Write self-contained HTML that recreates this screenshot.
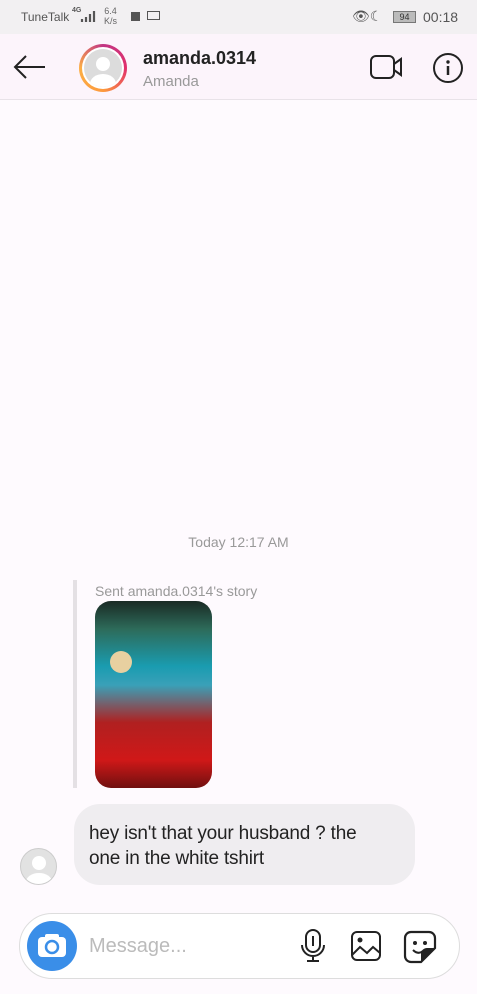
<!DOCTYPE html>
<html><head><style>
*{margin:0;padding:0;box-sizing:border-box}
body{width:477px;height:994px;background:#fefafe;font-family:"Liberation Sans",sans-serif;position:relative;overflow:hidden}
.a{position:absolute}
</style></head><body>
<div class="a" style="left:0;top:0;width:477px;height:34px;background:#f2f0f2"></div>
<div class="a" style="left:21px;top:10px;font-size:12px;color:#555">TuneTalk</div>
<div class="a" style="left:72px;top:7px;font-size:7px;color:#555;font-weight:bold">4G</div>
<svg class="a" style="left:80px;top:9px" width="18" height="14"><path d="M2 13v-3M6 13v-5M10 13v-8M14 13V2" stroke="#555" stroke-width="2.2"/></svg>
<div class="a" style="left:104px;top:6px;font-size:9px;color:#666;line-height:10px;text-align:center">6.4<br>K/s</div>
<div class="a" style="left:131px;top:12px;width:9px;height:9px;background:#555"></div>
<div class="a" style="left:147px;top:11px;width:13px;height:9px;border:1.5px solid #555"></div>
<div class="a" style="left:352px;top:8px;font-size:14px;color:#555">👁☾</div>
<div class="a" style="left:393px;top:11px;width:23px;height:12px;background:#bbb;border:1px solid #777;font-size:9px;text-align:center;line-height:10px;color:#333">94</div>
<div class="a" style="left:423px;top:9px;font-size:14px;color:#555">00:18</div>
<div class="a" style="left:0;top:34px;width:477px;height:66px;background:#fcf4fb;border-bottom:1px solid #e8e2e8"></div>
<svg class="a" style="left:12px;top:53px" width="36" height="28"><path d="M33 14H3M14 3L3 14L14 25" stroke="#222" stroke-width="2" fill="none"/></svg>
<div class="a" style="left:79px;top:44px;width:48px;height:48px;border-radius:50%;background:conic-gradient(#c13584,#e1306c,#fd9a3c,#fcaf45,#c13584)"></div>
<div class="a" style="left:82px;top:47px;width:42px;height:42px;border-radius:50%;background:#fff"></div>
<div class="a" style="left:84px;top:49px;width:38px;height:38px;border-radius:50%;background:#dcdcdc;overflow:hidden"><div class="a" style="left:12px;top:8px;width:14px;height:14px;border-radius:50%;background:#fff"></div><div class="a" style="left:6px;top:25px;width:26px;height:20px;border-radius:50%;background:#fff"></div></div>
<div class="a" style="left:143px;top:48px;font-size:18px;font-weight:bold;color:#222">amanda.0314</div>
<div class="a" style="left:143px;top:73px;font-size:15px;color:#999">Amanda</div>
<svg class="a" style="left:369px;top:53px" width="36" height="28"><rect x="2" y="3" width="23" height="22" rx="5" stroke="#222" stroke-width="2" fill="none"/><path d="M25 11L32 6V22L25 17" stroke="#222" stroke-width="2" fill="none"/></svg>
<svg class="a" style="left:432px;top:52px" width="32" height="32"><circle cx="16" cy="16" r="14" stroke="#222" stroke-width="2" fill="none"/><circle cx="16" cy="10" r="1.7" fill="#222"/><path d="M16 14V23" stroke="#222" stroke-width="2.5"/></svg>
<div class="a" style="left:0;top:534px;width:477px;text-align:center;font-size:14px;color:#999">Today 12:17 AM</div>
<div class="a" style="left:73px;top:580px;width:4px;height:208px;background:#e4e0e4"></div>
<div class="a" style="left:95px;top:583px;font-size:14px;color:#999">Sent amanda.0314's story</div>
<div class="a" style="left:95px;top:601px;width:117px;height:187px;border-radius:16px;overflow:hidden;background:linear-gradient(180deg,#1a2a24 0%,#2d6b5a 15%,#1a9cb0 35%,#3aa0b8 45%,#b02020 65%,#d01818 85%,#701010 100%)"><div class="a" style="left:15px;top:50px;width:22px;height:22px;border-radius:50%;background:#e8d0a0"></div></div>
<div class="a" style="left:74px;top:804px;width:341px;height:81px;border-radius:26px;background:#efedf0"></div>
<div class="a" style="left:89px;top:821px;font-size:19px;line-height:25px;color:#222;white-space:nowrap;letter-spacing:-0.2px">hey isn't that your husband ? the<br>one in the white tshirt</div>
<div class="a" style="left:20px;top:848px;width:37px;height:37px;border-radius:50%;background:#e2e2e2;border:1px solid #ccc;overflow:hidden"><div class="a" style="left:11px;top:7px;width:14px;height:14px;border-radius:50%;background:#fff"></div><div class="a" style="left:5px;top:24px;width:26px;height:18px;border-radius:50%;background:#fff"></div></div>
<div class="a" style="left:19px;top:913px;width:441px;height:66px;border-radius:33px;border:1px solid #ddd;background:#fff"></div>
<div class="a" style="left:27px;top:921px;width:50px;height:50px;border-radius:50%;background:#3a8ee8"></div>
<svg class="a" style="left:36px;top:930px" width="32" height="32"><rect x="2" y="7" width="28" height="20" rx="4" fill="#fff"/><rect x="9" y="4" width="14" height="5" rx="2" fill="#fff"/><circle cx="16" cy="17" r="6" stroke="#3a8ee8" stroke-width="2.5" fill="none"/></svg>
<div class="a" style="left:89px;top:935px;font-size:20px;color:#bbb">Message...</div>
<svg class="a" style="left:298px;top:928px" width="30" height="36"><rect x="8" y="2" width="14" height="22" rx="7" stroke="#222" stroke-width="2" fill="none"/><path d="M4 17a11 11 0 0 0 22 0M15 28v5M9 33h12M15 8v10" stroke="#222" stroke-width="2" fill="none"/></svg>
<svg class="a" style="left:350px;top:930px" width="32" height="32"><rect x="2" y="2" width="28" height="28" rx="5" stroke="#222" stroke-width="2" fill="none"/><circle cx="10" cy="10" r="2.5" fill="#222"/><path d="M2 25L10 17L17 23L23 17L30 23" stroke="#222" stroke-width="2" fill="none"/></svg>
<svg class="a" style="left:403px;top:930px" width="34" height="34"><path d="M8 2H26a6 6 0 0 1 6 6V18L18 32H8a6 6 0 0 1-6-6V8a6 6 0 0 1 6-6Z" stroke="#222" stroke-width="2.2" fill="none"/><path d="M32 18H24a6 6 0 0 0-6 6V32Z" fill="#222"/><circle cx="12" cy="13" r="2" fill="#222"/><circle cx="22" cy="13" r="2" fill="#222"/><path d="M10 20q5 5 10 1" stroke="#222" stroke-width="2" fill="none"/></svg>
</body></html>
